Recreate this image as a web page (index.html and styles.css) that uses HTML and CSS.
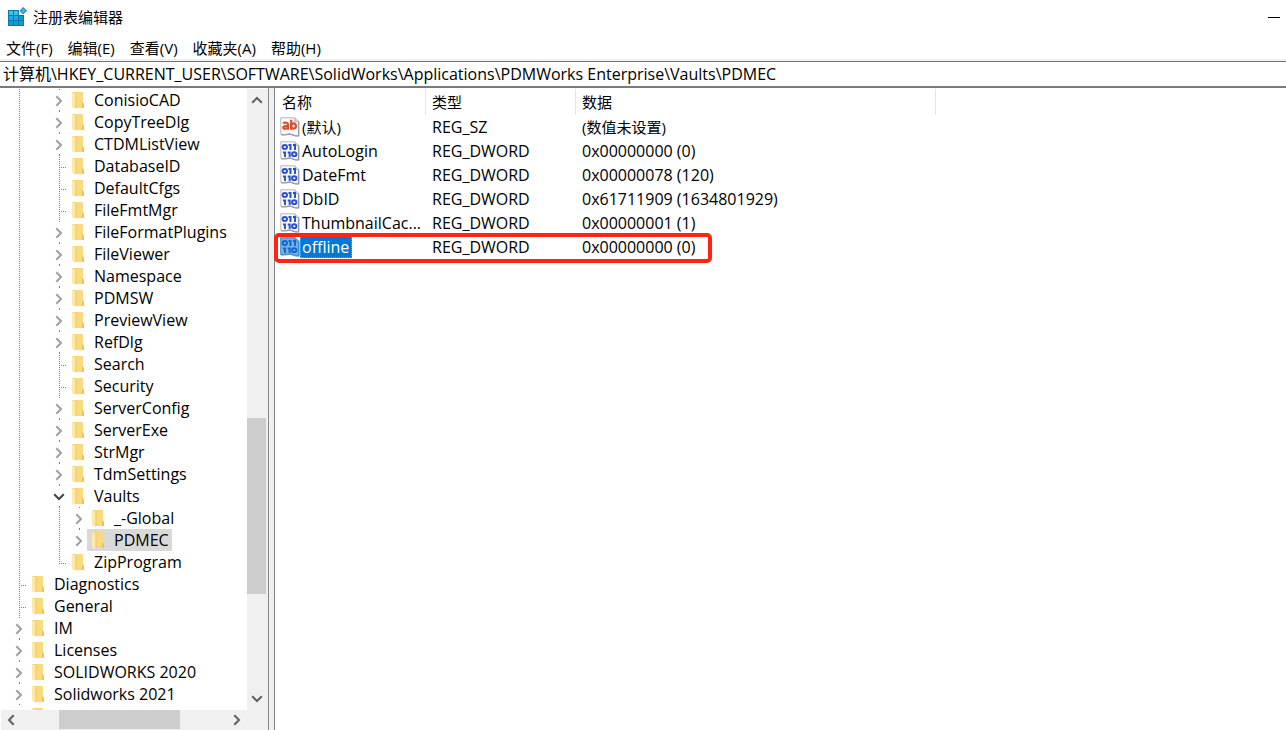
FILE: index.html
```html
<!DOCTYPE html>
<html lang="zh-CN">
<head>
<meta charset="utf-8">
<title>注册表编辑器</title>
<link rel="stylesheet" href="styles.css">
</head>
<body>
<svg class="defs" aria-hidden="true">
  <symbol id="folder" viewBox="0 0 12 18">
    <path d="M0 1h11v11l1 1v4H3z" fill="#f6d578"/>
    <path d="M6 1h5v11l1 1v4H4V4z" fill="#fada80"/>
    <path d="M10 11l2 2v4h-2z" fill="#eec35b"/>
    <path d="M0 1l4 2v15l-4-2z" fill="#ffe9a6"/>
    <path d="M4 3v14" stroke="#e9c463" stroke-width="1"/>
  </symbol>
  <symbol id="chev" viewBox="0 0 8 12">
    <path d="M1.3 1.2L6 6l-4.7 4.8" fill="none" stroke="currentColor" stroke-width="2"/>
  </symbol>
  <symbol id="page" viewBox="0 0 20 20">
    <path d="M.8.8h14l4 3.6v14.4c-3 .8-5-.8-8-1.6c-3-.8-6 1.3-10 .2z" fill="#f8f8f9" stroke="#b5b8bd" stroke-width="1"/>
    <path d="M14.8.8v3.6h4" fill="#d6d8dc" stroke="#a0a3a8" stroke-width=".8"/>
    <path d="M18.6 5v14M1 17.6c4 1.2 7-1 10-.2s5 2 8 1.4" fill="none" stroke="#989ba1" stroke-width="1.3"/>
  </symbol>
  <symbol id="string" viewBox="0 0 20 20">
    <use href="#page"/>
    <g fill="none" stroke="#d8502c" stroke-width="2.2">
      <path d="M3.2 6.4c1.400-1 4.800-1.200 4.800 1.400v4.900M8 8.800c-3 0-4.800.2-4.800 1.700 0 2 4.400 1.600 4.800-.6"/>
      <path d="M11.200 2.800v9.900"/><ellipse cx="13.500" cy="9" rx="2.400" ry="2.700"/>
    </g>
  </symbol>
  <symbol id="binary" viewBox="0 0 20 20">
    <use href="#page"/>
    <g fill="none" stroke="#2a50d8" stroke-width="2">
      <ellipse cx="4.800" cy="6" rx="2.200" ry="1.900"/>
      <path d="M8.500 4h2M10.500 3v6M13 4h2M15 3v6"/>
      <path d="M3 11.500h2M5 10.500v5.500M7.700 11.500h2M9.700 10.500v5.500"/>
      <ellipse cx="14.200" cy="13.200" rx="2.200" ry="1.900"/>
    </g>
  </symbol>
  <symbol id="binary-selected" viewBox="0 0 20 20">
    <use href="#binary"/>
    <path d="M0 0h15l4.500 4v15.400c-3 .6-5-.8-8-1.600c-4-.8-7 1.300-11.500.2z" fill="#0078d7" opacity=".55"/>
  </symbol>
</svg>

<div class="window">
  <header class="titlebar">
    <svg class="app-icon" viewBox="0 0 20 20" aria-hidden="true">
      <path d="M1 3h11v5h5v11H1z" fill="#0879b0"/>
      <path d="M2 4h4v4H2zM7 4h4v4H7z" fill="#36c3f2"/>
      <path d="M2 9h4v4H2zM7 9h4v4H7z" fill="#22a9e0"/>
      <path d="M12 9h4v4h-4zM2 14h4v4H2zM7 14h4v4H7zM12 14h4v4h-4z" fill="#139bd3"/>
      <path d="M16.200 0L20 3.800l-3.800 3.700-3.700-3.700z" fill="#258fbd"/>
      <path d="M16.200 1.800l2 2-2 1.900-1.900-1.900z" fill="#5ab9dc"/>
    </svg>
    <h1 class="title">注册表编辑器</h1>
    <button class="minimize" aria-label="最小化"></button>
  </header>
  <nav class="menubar">
    <button>文件(F)</button><button>编辑(E)</button><button>查看(V)</button><button>收藏夹(A)</button><button>帮助(H)</button>
  </nav>
  <input class="address" aria-label="地址" value="计算机\HKEY_CURRENT_USER\SOFTWARE\SolidWorks\Applications\PDMWorks Enterprise\Vaults\PDMEC">

  <main class="panes">
    <section class="tree-pane">
      <div class="tree-main">
        <ul class="tree">
          <li><i class="line"></i><i class="gap"></i><button class="toggle" aria-label="展开"><svg><use href="#chev"/></svg></button><span class="item"><svg><use href="#folder"/></svg>ConisioCAD</span></li>
          <li><i class="line"></i><i class="gap"></i><button class="toggle" aria-label="展开"><svg><use href="#chev"/></svg></button><span class="item"><svg><use href="#folder"/></svg>CopyTreeDlg</span></li>
          <li><i class="line"></i><i class="gap"></i><button class="toggle" aria-label="展开"><svg><use href="#chev"/></svg></button><span class="item"><svg><use href="#folder"/></svg>CTDMListView</span></li>
          <li><i class="line"></i><i class="gap"></i><i class="branch"></i><span class="item"><svg><use href="#folder"/></svg>DatabaseID</span></li>
          <li><i class="line"></i><i class="gap"></i><i class="branch"></i><span class="item"><svg><use href="#folder"/></svg>DefaultCfgs</span></li>
          <li><i class="line"></i><i class="gap"></i><i class="branch"></i><span class="item"><svg><use href="#folder"/></svg>FileFmtMgr</span></li>
          <li><i class="line"></i><i class="gap"></i><button class="toggle" aria-label="展开"><svg><use href="#chev"/></svg></button><span class="item"><svg><use href="#folder"/></svg>FileFormatPlugins</span></li>
          <li><i class="line"></i><i class="gap"></i><button class="toggle" aria-label="展开"><svg><use href="#chev"/></svg></button><span class="item"><svg><use href="#folder"/></svg>FileViewer</span></li>
          <li><i class="line"></i><i class="gap"></i><button class="toggle" aria-label="展开"><svg><use href="#chev"/></svg></button><span class="item"><svg><use href="#folder"/></svg>Namespace</span></li>
          <li><i class="line"></i><i class="gap"></i><button class="toggle" aria-label="展开"><svg><use href="#chev"/></svg></button><span class="item"><svg><use href="#folder"/></svg>PDMSW</span></li>
          <li><i class="line"></i><i class="gap"></i><button class="toggle" aria-label="展开"><svg><use href="#chev"/></svg></button><span class="item"><svg><use href="#folder"/></svg>PreviewView</span></li>
          <li><i class="line"></i><i class="gap"></i><button class="toggle" aria-label="展开"><svg><use href="#chev"/></svg></button><span class="item"><svg><use href="#folder"/></svg>RefDlg</span></li>
          <li><i class="line"></i><i class="gap"></i><i class="branch"></i><span class="item"><svg><use href="#folder"/></svg>Search</span></li>
          <li><i class="line"></i><i class="gap"></i><i class="branch"></i><span class="item"><svg><use href="#folder"/></svg>Security</span></li>
          <li><i class="line"></i><i class="gap"></i><button class="toggle" aria-label="展开"><svg><use href="#chev"/></svg></button><span class="item"><svg><use href="#folder"/></svg>ServerConfig</span></li>
          <li><i class="line"></i><i class="gap"></i><button class="toggle" aria-label="展开"><svg><use href="#chev"/></svg></button><span class="item"><svg><use href="#folder"/></svg>ServerExe</span></li>
          <li><i class="line"></i><i class="gap"></i><button class="toggle" aria-label="展开"><svg><use href="#chev"/></svg></button><span class="item"><svg><use href="#folder"/></svg>StrMgr</span></li>
          <li><i class="line"></i><i class="gap"></i><button class="toggle" aria-label="展开"><svg><use href="#chev"/></svg></button><span class="item"><svg><use href="#folder"/></svg>TdmSettings</span></li>
          <li><i class="line"></i><i class="gap"></i><button class="toggle open" aria-label="折叠"><svg><use href="#chev"/></svg></button><span class="item"><svg><use href="#folder"/></svg>Vaults</span></li>
          <li><i class="line"></i><i class="gap"></i><i class="line"></i><button class="toggle" aria-label="展开"><svg><use href="#chev"/></svg></button><span class="item"><svg><use href="#folder"/></svg>_-Global</span></li>
          <li><i class="line"></i><i class="gap"></i><i class="line"></i><button class="toggle last" aria-label="展开"><svg><use href="#chev"/></svg></button><span class="item selected"><svg><use href="#folder"/></svg>PDMEC</span></li>
          <li><i class="line"></i><i class="gap"></i><i class="branch last"></i><span class="item"><svg><use href="#folder"/></svg>ZipProgram</span></li>
          <li><i class="branch"></i><span class="item"><svg><use href="#folder"/></svg>Diagnostics</span></li>
          <li><i class="branch"></i><span class="item"><svg><use href="#folder"/></svg>General</span></li>
          <li><button class="toggle" aria-label="展开"><svg><use href="#chev"/></svg></button><span class="item"><svg><use href="#folder"/></svg>IM</span></li>
          <li><button class="toggle" aria-label="展开"><svg><use href="#chev"/></svg></button><span class="item"><svg><use href="#folder"/></svg>Licenses</span></li>
          <li><button class="toggle" aria-label="展开"><svg><use href="#chev"/></svg></button><span class="item"><svg><use href="#folder"/></svg>SOLIDWORKS 2020</span></li>
          <li><button class="toggle" aria-label="展开"><svg><use href="#chev"/></svg></button><span class="item"><svg><use href="#folder"/></svg>Solidworks 2021</span></li>
          <li><i class="gap"></i><span class="item"><svg><use href="#folder"/></svg></span></li>
        </ul>
        <div class="vscroll">
          <button class="arrow up" aria-label="向上滚动"><svg><use href="#chev"/></svg></button>
          <div class="track"><div class="thumb"></div></div>
          <button class="arrow down" aria-label="向下滚动"><svg><use href="#chev"/></svg></button>
        </div>
      </div>
      <div class="hscroll">
        <button class="arrow left" aria-label="向左滚动"><svg><use href="#chev"/></svg></button>
        <div class="track"><div class="thumb"></div></div>
        <button class="arrow right" aria-label="向右滚动"><svg><use href="#chev"/></svg></button>
      </div>
    </section>
    <div class="splitter"></div>
    <section class="values-pane">
      <table class="values">
        <colgroup><col class="c-name"><col class="c-type"><col class="c-data"><col></colgroup>
        <thead><tr><th>名称</th><th>类型</th><th>数据</th><td></td></tr></thead>
        <tbody>
          <tr><td><div class="name"><svg><use href="#string"/></svg><span class="cjk">(默认)</span></div></td><td>REG_SZ</td><td class="cjk">(数值未设置)</td><td></td></tr>
          <tr><td><div class="name"><svg><use href="#binary"/></svg><span>AutoLogin</span></div></td><td>REG_DWORD</td><td>0x00000000 (0)</td><td></td></tr>
          <tr><td><div class="name"><svg><use href="#binary"/></svg><span>DateFmt</span></div></td><td>REG_DWORD</td><td>0x00000078 (120)</td><td></td></tr>
          <tr><td><div class="name"><svg><use href="#binary"/></svg><span>DbID</span></div></td><td>REG_DWORD</td><td>0x61711909 (1634801929)</td><td></td></tr>
          <tr><td><div class="name"><svg><use href="#binary"/></svg><span>ThumbnailCac...</span></div></td><td>REG_DWORD</td><td>0x00000001 (1)</td><td></td></tr>
          <tr class="marked"><td><div class="name chosen"><svg><use href="#binary-selected"/></svg><span>offline</span></div></td><td>REG_DWORD</td><td>0x00000000 (0)</td><td></td></tr>
        </tbody>
      </table>
    </section>
  </main>
</div>
</body>
</html>
```

FILE: styles.css
```css
*, ::before, ::after { box-sizing: border-box; }

body {
  margin: 0;
  background: #fff;
  color: #000;
  font: 15px/22px "Open Sans", "Noto Sans CJK SC", sans-serif;
}

button {
  border: 0;
  padding: 0;
  background: none;
  color: inherit;
  font: inherit;
}

.defs { position: absolute; width: 0; height: 0; }

.window {
  display: flex;
  flex-direction: column;
  height: 100vh;
  overflow: hidden;
}

/* Title bar and menu */
.titlebar {
  display: flex;
  align-items: center;
  flex: none;
  height: 34px;
  padding: 0 6px 0 7px;
}
.app-icon { width: 20px; height: 20px; margin-right: 6px; }
.title { flex: 1; margin: 0; font-size: 15px; font-weight: 400; }
.minimize { width: 12px; height: 2px; }
.minimize::before { content: ""; display: block; height: 1px; background: #000; }

.menubar {
  display: flex;
  flex: none;
  gap: 15px;
  height: 27px;
  padding: 3px 6px 0;
  border-bottom: 2px solid #f0f0f0;
}

.address {
  flex: none;
  width: 100%;
  height: 27px;
  padding: 0 3px 2px;
  border: 0;
  border-top: 1px solid #777578;
  border-bottom: 2px solid #7b797c;
  border-radius: 0;
  background: #fff;
  color: #000;
  font: inherit;
  font-size: 16px;
  outline: 0;
}

.panes { display: flex; flex: 1; min-height: 0; }

/* Key tree */
.tree-pane {
  display: flex;
  flex-direction: column;
  flex: none;
  width: 268px;
}
.tree-main { display: flex; flex: 1; min-height: 0; }
.tree {
  flex: 1;
  margin: 0;
  padding: 1px 0 0 9px;
  overflow: hidden;
  list-style: none;
  font-size: 16px;
}
.tree li { display: flex; height: 22px; white-space: nowrap; }

.line { width: 20px; flex: none; }
.gap { width: 20px; flex: none; }
.gap:first-child { width: 18px; }
.branch, .toggle { width: 18px; flex: none; }
.line {
  background: repeating-linear-gradient(#808080 0 1px, transparent 1px 2px) 10px 0 / 1px 100% no-repeat;
}
.branch {
  background:
    repeating-linear-gradient(#808080 0 1px, transparent 1px 2px) 10px 0 / 1px 100% no-repeat,
    repeating-linear-gradient(90deg, #808080 0 1px, transparent 1px 2px) 10px 12px / 9px 1px no-repeat;
}
.branch.last { background-size: 1px 12px, 9px 1px; }

.toggle {
  display: grid;
  place-items: center;
  padding: 2px 0 0 2px;
  color: #a0a0a0;
  background:
    linear-gradient(#808080, #808080) 10px 0 / 1px 1px no-repeat,
    linear-gradient(#808080, #808080) 10px 100% / 1px 1px no-repeat;
}
.toggle.last { background: linear-gradient(#808080, #808080) 10px 0 / 1px 1px no-repeat; }
.toggle svg { width: 8px; height: 12px; }
.toggle.open { color: #404040; }
.toggle.open svg { transform: rotate(90deg); }

.item {
  display: flex;
  align-items: center;
  gap: 10px;
  padding: 0 3px 0 5px;
}
.item svg { width: 12px; height: 18px; }
.selected { background: #d9d9d9; }

/* Scroll bars */
.arrow { display: grid; place-items: center; color: #606060; }
.arrow svg { width: 8px; height: 12px; }
.up svg { transform: rotate(-90deg); }
.down svg { transform: rotate(90deg); }
.left svg { transform: rotate(180deg); }
.track { display: flex; flex: 1; }
.thumb { background: #cdcdcd; }

.vscroll {
  display: flex;
  flex-direction: column;
  width: 21px;
  margin-top: 1px;
  padding-right: 2px;
  background: #f0f0f0;
}
.vscroll .arrow { height: 22px; }
.vscroll .track { flex-direction: column; justify-content: flex-end; padding-bottom: 94px; }
.vscroll .thumb { height: 31%; min-height: 176px; }

.hscroll {
  display: flex;
  flex: none;
  height: 20px;
  margin-left: 1px;
  padding-right: 21px;
  background: #f0f0f0;
}
.hscroll .arrow { width: 20px; }
.hscroll .track { padding-left: 38px; }
.hscroll .thumb { width: 121px; height: 19px; }

.splitter {
  flex: none;
  width: 7px;
  border: solid #828790;
  border-width: 0 1px;
  background: #f0f0f0;
}

/* Values */
.values-pane { flex: 1; min-width: 0; }
.values { width: 100%; border-collapse: collapse; table-layout: fixed; }
.c-name { width: 151px; }
.c-type { width: 150px; }
.c-data { width: 360px; }
.values th {
  height: 27px;
  padding: 0 6px;
  background: linear-gradient(#e5e5e5, #e5e5e5) right bottom / 1px 26px no-repeat;
  font-weight: 400;
  text-align: left;
}
.values th:first-child { padding-left: 7px; }
.values td { height: 24px; padding: 0 6px; font-size: 16px; white-space: nowrap; }
.values td:first-child { padding: 0 0 0 5px; }
.values .cjk { font-size: 15px; }
.name { display: flex; align-items: center; }
.name svg { width: 20px; height: 20px; }
.name span { padding: 0 3px 0 2px; }
.chosen span { background: #0078d7; color: #fff; outline: 1px dotted #e08a3c; outline-offset: -1px; }

/* Callout frame around the marked value; it lies over the row */
.marked { position: relative; }
.marked::after {
  content: "";
  position: absolute;
  top: -2px;
  left: -1px;
  width: 438px;
  height: 30px;
  border: 4px solid #ff2415;
  border-radius: 5px;
}
```
